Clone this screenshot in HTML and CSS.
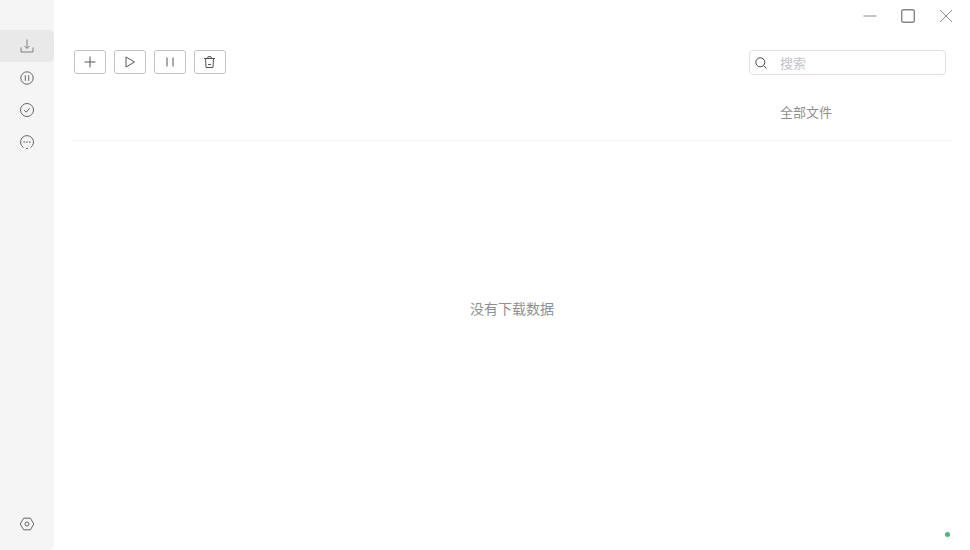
FILE: index.html
```html
<!DOCTYPE html>
<html lang="zh-CN">
<head>
    <meta charset="UTF-8">
    <title>下载</title>
    <link rel="stylesheet" href="styles.css">
</head>
<body>
<div class="app">

    <!-- Sidebar -->
    <aside class="sidebar">
        <a class="side-item active" href="#">
            <svg width="16" height="16" viewBox="0 0 16 16"><path d="M8 1.500v8.500M5.500 8 8 10.500 10.500 8M2 9.500v4.500h12v-4.500"/></svg>
        </a>
        <a class="side-item" href="#">
            <svg width="16" height="16" viewBox="0 0 16 16"><circle cx="8" cy="8" r="6.200"/><path d="M6.300 5.200v5.600M9.700 5.200v5.600"/></svg>
        </a>
        <a class="side-item" href="#">
            <svg width="16" height="16" viewBox="0 0 16 16"><circle cx="8" cy="8" r="6.500"/><path d="M5.200 8.200 7.200 10.200 10.800 6.200"/></svg>
        </a>
        <a class="side-item" href="#">
            <svg width="16" height="16" viewBox="0 0 16 16"><path d="M4.500 13.600A6.500 6.500 0 1 1 11.500 13.600"/><path d="M7 14.500h2"/><path class="dots" d="M4.600 8h1.200M7.400 8h1.200M10.200 8h1.200"/></svg>
        </a>
        <a class="side-item settings" href="#">
            <svg width="16" height="16" viewBox="0 0 16 16"><path d="M4.600 2.200h6.800L14.800 8l-3.400 5.800H4.600L1.200 8z"/><circle cx="8" cy="8" r="2"/></svg>
        </a>
    </aside>

    <main class="main">
        <!-- Window controls -->
        <div class="titlebar">
            <span class="win-btn"><svg width="14" height="14" viewBox="0 0 14 14"><path d="M0.500 7h13"/></svg></span>
            <span class="win-btn"><svg width="14" height="14" viewBox="0 0 14 14"><rect x="0.700" y="0.700" width="12.600" height="12.600" rx="1.500" class="thick"/></svg></span>
            <span class="win-btn"><svg width="14" height="14" viewBox="0 0 14 14"><path d="M1 1 13 13M13 1 1 13"/></svg></span>
        </div>

        <!-- Toolbar -->
        <div class="toolbar">
            <button class="tool-btn"><svg width="12" height="12" viewBox="0 0 12 12"><path d="M6 0.500v11M0.500 6h11"/></svg></button>
            <button class="tool-btn"><svg width="12" height="12" viewBox="0 0 12 12"><path d="M2 1 10.500 6 2 11z"/></svg></button>
            <button class="tool-btn"><svg width="12" height="12" viewBox="0 0 12 12"><path d="M3 1.500v9M9 1.500v9"/></svg></button>
            <button class="tool-btn"><svg width="12" height="12" viewBox="0 0 12 12"><path d="M0 2.500h11M3.500 2.500 4 0.700h3L7.500 2.500M1.500 2.500l0.500 9h7l0.500-9M4 8.500h3"/></svg></button>
            <div class="search">
                <svg width="12" height="12" viewBox="0 0 12 12"><circle cx="5.300" cy="5.300" r="4.500"/><path d="M8.600 8.600 11.500 11.500"/></svg>
                <input type="text" placeholder="搜索">
            </div>
        </div>

        <!-- Table head -->
        <div class="list-head">
            <span class="col-type">全部文件</span>
        </div>

        <div class="empty">没有下载数据</div>
    </main>

    <span class="status-dot"></span>
</div>
</body>
</html>
```

FILE: styles.css
```css
* { box-sizing: border-box; }
html, body { margin: 0; height: 100%; background: #fff; overflow: hidden; }
body { font-family: "Noto Sans CJK SC", "Liberation Sans", sans-serif; color: #909090; }
svg { display: block; fill: none; stroke: #666; stroke-width: 1; }

.app { position: relative; display: flex; height: 550px; }

.sidebar { width: 54px; flex-shrink: 0; display: flex; flex-direction: column; padding: 30px 0 10px; background: #f5f5f5; border-bottom-right-radius: 6px; }
.side-item { height: 32px; display: flex; align-items: center; justify-content: center; }
.side-item.active { background: #e9e9e9; border-radius: 0 5px 5px 0; }
.side-item.active svg { stroke: #808080; }
.side-item .dots { stroke-width: 1.500; }
.settings { margin-top: auto; }

.main { flex: 1; min-width: 0; display: flex; flex-direction: column; }

.titlebar { height: 32px; display: flex; justify-content: flex-end; padding: 9px 5px 0 0; }
.win-btn { width: 38px; height: 14px; display: flex; justify-content: center; }
.win-btn svg { stroke: #8c8c8c; }
.win-btn .thick { stroke: #888; stroke-width: 1.400; }

.toolbar { height: 25px; margin-top: 18px; display: flex; align-items: flex-start; gap: 8px; padding: 0 24px 0 20px; }
.tool-btn { width: 32px; height: 24px; padding: 0; display: flex; align-items: center; justify-content: center; background: #fff; border: 1px solid #c4c4c4; border-radius: 3px; }
.tool-btn svg { stroke: #555; }

.search { margin-left: auto; width: 197px; height: 25px; display: flex; align-items: center; gap: 13px; padding-left: 5px; border: 1px solid #dcdfe6; border-radius: 4px; }
.search svg { flex-shrink: 0; stroke: #444; }
.search input { flex: 1; min-width: 0; border: 0; outline: 0; padding: 0; font: 13px "Noto Sans CJK SC", sans-serif; background: none; }
.search input::placeholder { color: #c0c4cc; }

.list-head { height: 66px; margin: 0 18px; display: flex; align-items: center; justify-content: flex-end; padding: 8px 120px 0 0; border-bottom: 1px solid #f3f3f3; }
.col-type { font-size: 13px; color: #909090; }

.empty { flex: 1; display: flex; align-items: center; justify-content: center; padding-bottom: 76px; font-size: 14px; color: #909090; }

.status-dot { position: absolute; left: 945px; top: 532px; width: 5px; height: 5px; border-radius: 50%; background: #4fb477; }
```
